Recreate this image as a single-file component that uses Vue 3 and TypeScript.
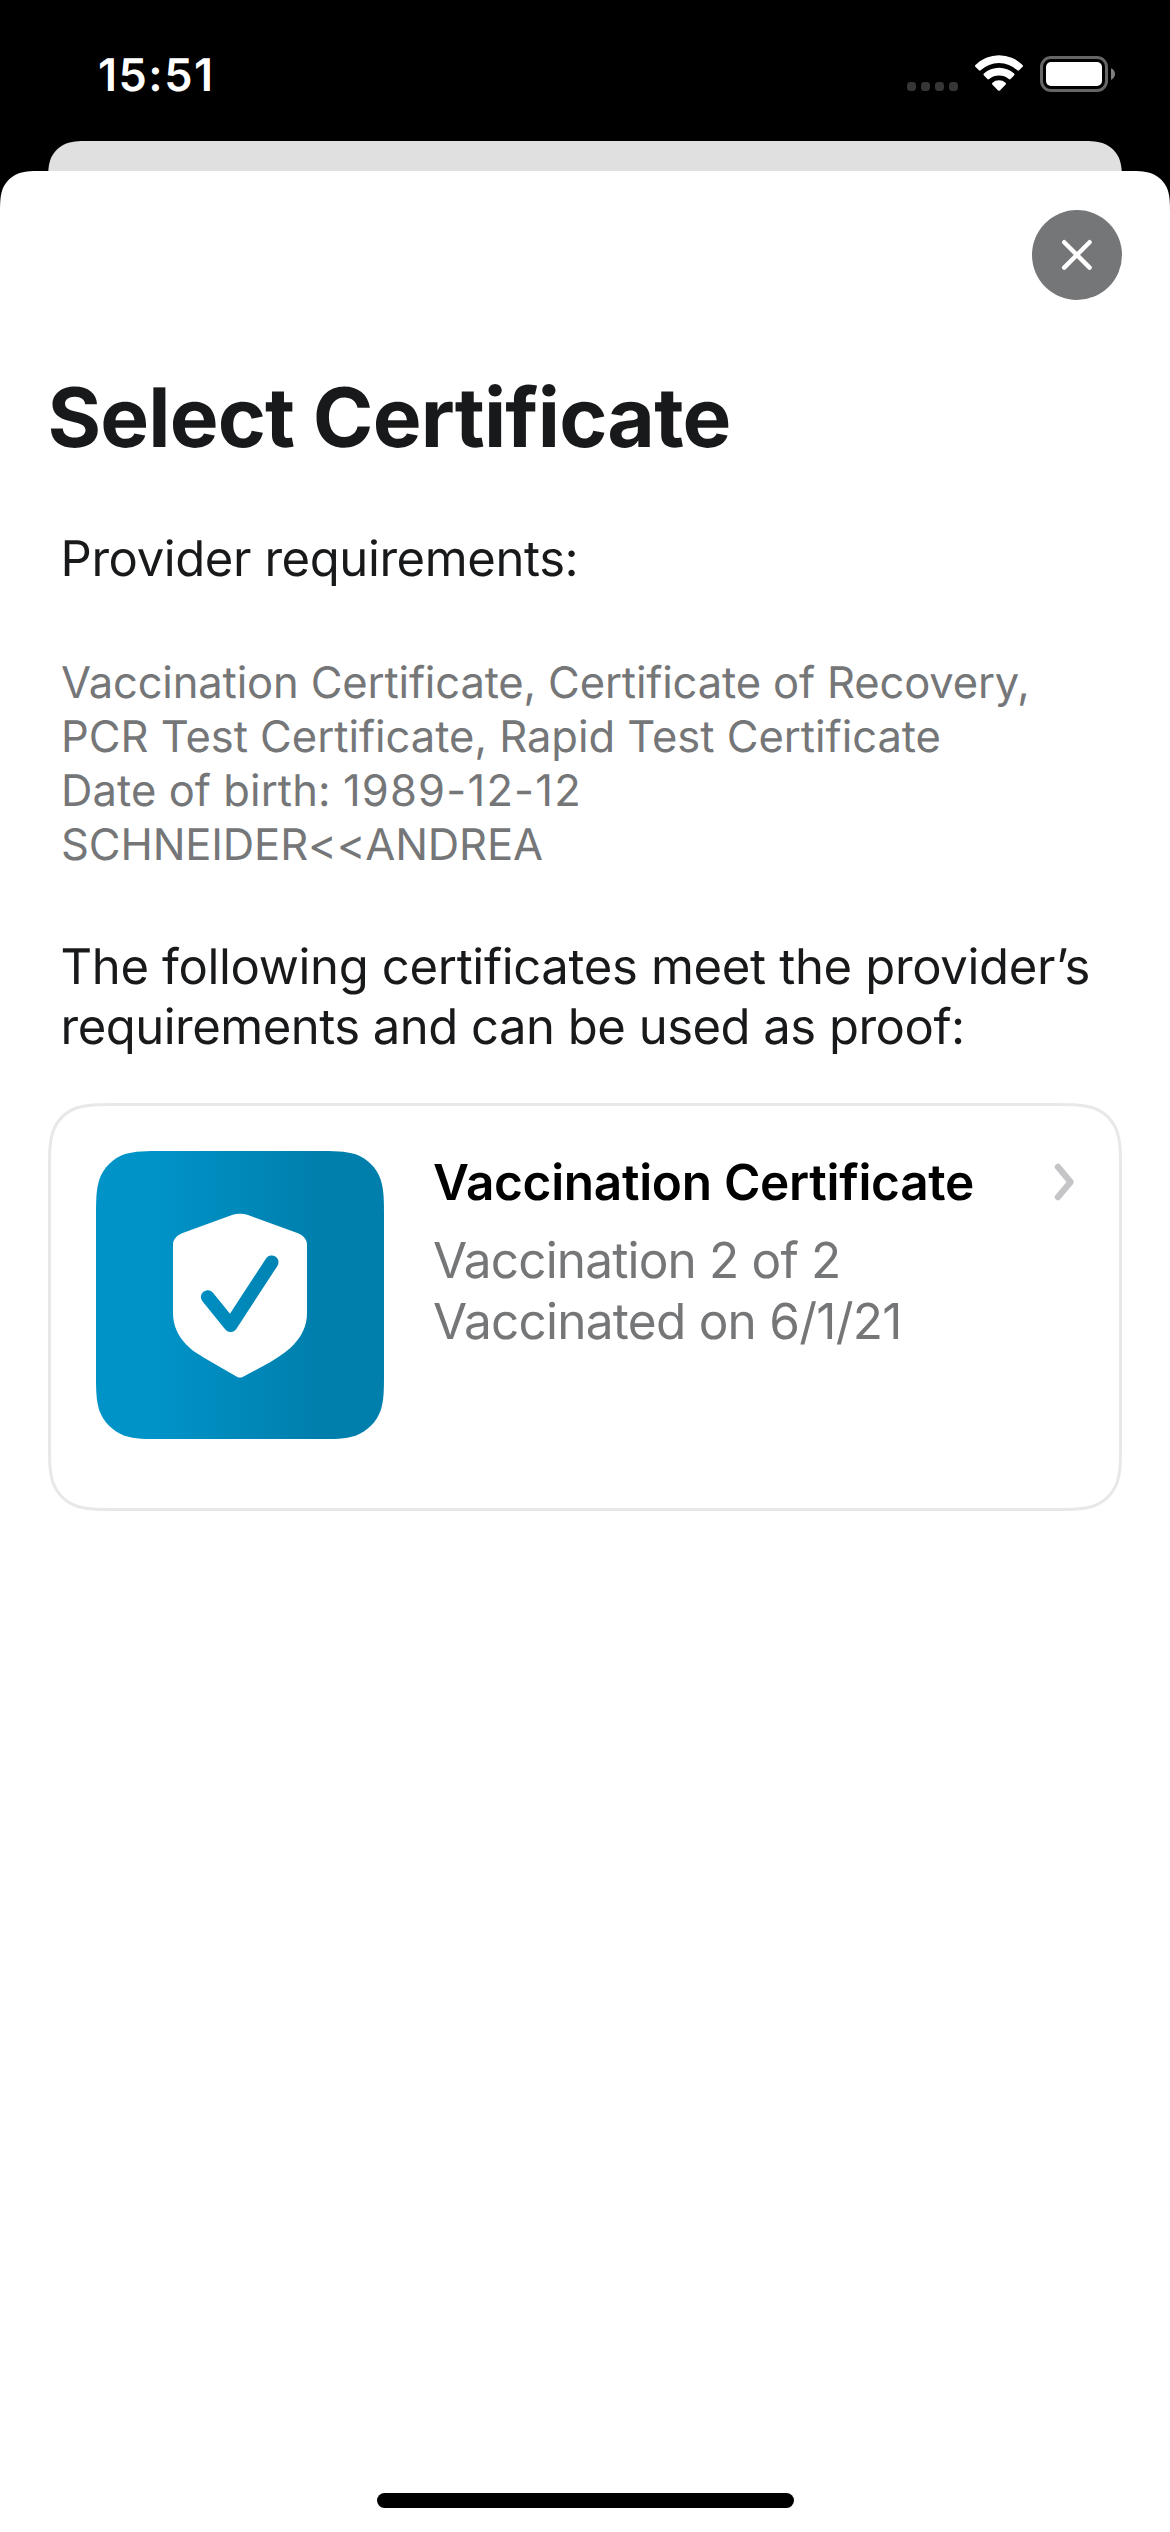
<script setup lang="ts">
interface Run {
  text: string
  spacing: number
}

type Line = Run[]

const title = 'Select Certificate'

const requirements: Line[] = [
  [{ text: 'Vaccination Certificate, Certificate of Recovery,', spacing: -0.143 }],
  [{ text: 'PCR Test Certificate, Rapid Test Certificate', spacing: -0.016 }],
  [
    { text: 'Date of birth: ', spacing: 0.09 },
    { text: '1989-12-12', spacing: 1.2 },
  ],
  [{ text: 'SCHNEIDER<<ANDREA', spacing: -0.127 }],
]

const hint: Line[] = [
  [{ text: 'The following certificates meet the provider’s', spacing: -0.332 }],
  [{ text: 'requirements and can be used as proof:', spacing: -0.502 }],
]

const certificate = {
  name: 'Vaccination Certificate',
  details: [
    { text: 'Vaccination 2 of 2', spacing: -0.828 },
    { text: 'Vaccinated on 6/1/21', spacing: -0.74 },
  ] as Run[],
}

// Rounded rectangle with continuous corners
function squircle(x: number, y: number, w: number, h: number, r: number): string {
  const a = 1.52866471 * r
  const b = 1.08849296 * r
  const c = 0.86840694 * r
  const d = 0.63149399 * r
  const e = 0.074911 * r
  const f = 0.37282392 * r
  const g = 0.16905899 * r
  const R = x + w
  const B = y + h
  return [
    `M${x + a} ${y}H${R - a}`,
    `C${R - b} ${y} ${R - c} ${y} ${R - d} ${y + e}`,
    `C${R - f} ${y + g} ${R - g} ${y + f} ${R - e} ${y + d}`,
    `C${R} ${y + c} ${R} ${y + b} ${R} ${y + a}`,
    `V${B - a}`,
    `C${R} ${B - b} ${R} ${B - c} ${R - e} ${B - d}`,
    `C${R - g} ${B - f} ${R - f} ${B - g} ${R - d} ${B - e}`,
    `C${R - c} ${B} ${R - b} ${B} ${R - a} ${B}`,
    `H${x + a}`,
    `C${x + b} ${B} ${x + c} ${B} ${x + d} ${B - e}`,
    `C${x + f} ${B - g} ${x + g} ${B - f} ${x + e} ${B - d}`,
    `C${x} ${B - c} ${x} ${B - b} ${x} ${B - a}`,
    `V${y + a}`,
    `C${x} ${y + b} ${x} ${y + c} ${x + e} ${y + d}`,
    `C${x + g} ${y + f} ${x + f} ${y + g} ${x + d} ${y + e}`,
    `C${x + c} ${y} ${x + b} ${y} ${x + a} ${y}Z`,
  ].join('')
}

const tilePath = squircle(0, 0, 288, 288, 45)
const cardPath = squircle(1.5, 1.5, 1071, 405, 43.5)
const behindClip = `path('${squircle(0, 0, 1074, 200, 30)}')`
const sheetClip = `path('${squircle(0, 0, 1170, 2500, 30)}')`
</script>

<template>
  <div class="screen">
    <header class="status">
      <time class="clock">15:51</time>
      <div class="indicators">
        <svg class="cellular" width="51" height="9" viewBox="0 0 51 9" aria-hidden="true">
          <rect v-for="i in 4" :key="i" :x="(i - 1) * 14" y="0" width="9" height="9" rx="3.4" fill="#363636" />
        </svg>
        <svg class="wifi" width="50" height="38" viewBox="974 54 50 38" fill="#fff" aria-hidden="true">
          <path d="M975.4 66.7Q974.6 66 975.4 65.1A33.2 33.2 0 0 1 1022.6 65.1Q1023.4 66 1022.6 66.7L1019.1 70.3Q1018.3 71.1 1017.4 70.3A27 27 0 0 0 980.6 70.3Q979.7 71.1 978.9 70.3Z" />
          <path d="M983.8 75.3Q983 74.4 983.9 73.6A22.4 22.4 0 0 1 1014.1 73.6Q1015 74.4 1014.2 75.3L1010.6 79Q1009.8 79.8 1008.9 79A16 16 0 0 0 989.1 79Q988.2 79.8 987.4 79Z" />
          <path d="M992.3 84.5Q991.5 83.7 992.5 82.8A9.9 9.9 0 0 1 1005.5 82.8Q1006.5 83.7 1005.7 84.5L999.9 90.4Q999 91.3 998.1 90.4Z" />
        </svg>
        <svg class="battery" width="75" height="36" viewBox="0 0 75 36" aria-hidden="true">
          <rect x="1.5" y="1.5" width="65" height="33" rx="9.5" fill="none" stroke="#666" stroke-width="3" />
          <rect x="6" y="6" width="56" height="24" rx="5" fill="#fff" />
          <path d="M71 12.3C73.4 13.3 75 15.5 75 18.1S73.4 22.9 71 23.9Z" fill="#808080" />
        </svg>
      </div>
    </header>

    <div class="behind" :style="{ clipPath: behindClip }"></div>

    <main class="sheet" :style="{ clipPath: sheetClip }">
      <div class="toolbar">
        <button class="close" type="button" aria-label="Close">
          <svg width="90" height="90" viewBox="0 0 90 90" fill="none" stroke="#fff" stroke-width="4.4" stroke-linecap="round" aria-hidden="true">
            <path d="M32.2 32.2L57.6 57.6M57.6 32.2L32.2 57.6" />
          </svg>
        </button>
      </div>

      <h1 class="title">{{ title }}</h1>

      <p class="label">Provider requirements:</p>

      <div class="requirements">
        <p v-for="(line, i) in requirements" :key="i"><span v-for="run in line" :key="run.text" :style="{ letterSpacing: run.spacing + 'px' }">{{ run.text }}</span></p>
      </div>

      <div class="hint">
        <p v-for="(line, i) in hint" :key="i"><span v-for="run in line" :key="run.text" :style="{ letterSpacing: run.spacing + 'px' }">{{ run.text }}</span></p>
      </div>

      <section class="card">
        <svg class="outline" width="1074" height="408" viewBox="0 0 1074 408" aria-hidden="true">
          <path :d="cardPath" fill="#fff" stroke="#e8e8e8" stroke-width="3" />
        </svg>
        <div class="content">
          <svg class="tile" width="288" height="288" viewBox="0 0 288 288" aria-hidden="true">
            <defs>
              <linearGradient id="tile-blue" gradientUnits="userSpaceOnUse" x1="60" y1="0" x2="222" y2="0">
                <stop offset="0" stop-color="#0093c8" />
                <stop offset="1" stop-color="#007fad" />
              </linearGradient>
            </defs>
            <path :d="tilePath" fill="url(#tile-blue)" />
            <path
              d="M77 93.5C77 88.5 80.5 84.5 86 82.2L136 64Q140 62.7 144 62.7T152 64L202 82.2C207.5 84.5 211 88.5 211 93.5V161.7C211 174.5 206 184.8 197.3 194C190 201.5 183 205.7 174 211.3L146.7 226Q144 227.2 141.3 226L114 210.3C105 204.6 98 201.5 90.7 194C82 184.8 77 174.5 77 161.7Z"
              fill="#fff"
            />
            <path
              d="M111.7 146L134.6 174.3L175.7 111.2"
              fill="none"
              stroke="url(#tile-blue)"
              stroke-width="13.6"
              stroke-linecap="round"
              stroke-linejoin="round"
            />
          </svg>
          <div class="info">
            <h2 class="name">{{ certificate.name }}</h2>
            <p v-for="line in certificate.details" :key="line.text" class="detail" :style="{ letterSpacing: line.spacing + 'px' }">{{ line.text }}</p>
          </div>
          <svg class="chevron" width="24" height="40" viewBox="0 0 24 40" fill="none" stroke="#c5c5c7" stroke-width="6.4" stroke-linecap="round" stroke-linejoin="round" aria-hidden="true">
            <path d="M6 5L18.6 20L6 35" />
          </svg>
        </div>
      </section>

      <div class="home"></div>
    </main>
  </div>
</template>

<style>
body {
  margin: 0;
  background: #000;
}
</style>

<style scoped>
.screen {
  display: flex;
  flex-direction: column;
  width: 1170px;
  height: 2532px;
  overflow: hidden;
  background: #000;
  font-family: Inter, 'Liberation Sans', sans-serif;
  text-rendering: geometricPrecision;
  color: #18191b;
}

h1,
h2,
p {
  margin: 0;
  white-space: pre;
}

.status {
  display: flex;
  justify-content: space-between;
  flex: none;
  height: 141px;
  color: #fff;
}

.clock {
  margin: 45px 0 0 98px;
  font-size: 45px;
  font-weight: 600;
  line-height: 60px;
  letter-spacing: 1.5px;
}

.indicators {
  display: flex;
  align-items: flex-start;
  padding-right: 55px;
}

.cellular {
  margin-top: 82px;
}

.wifi {
  margin: 54px 0 0 16px;
}

.battery {
  margin: 56px 0 0 16px;
}

.behind {
  flex: none;
  width: 1074px;
  height: 30px;
  margin: 0 48px;
  background: #e0e0e0;
}

.sheet {
  display: flex;
  flex-direction: column;
  flex: 1;
  background: #fff;
}

.toolbar {
  display: flex;
  justify-content: flex-end;
  padding: 39px 48px 0;
}

.close {
  display: block;
  width: 90px;
  height: 90px;
  padding: 0;
  border: 0;
  border-radius: 50%;
  background: #757678;
}

.close svg {
  display: block;
}

.title {
  margin: 69px 0 0 47.5px;
  font-size: 82px;
  font-weight: 700;
  line-height: 98px;
  letter-spacing: -0.851px;
}

.label {
  margin: 62px 0 0 60.5px;
  font-size: 49px;
  line-height: 60px;
  letter-spacing: -0.408px;
}

.requirements {
  margin: 67px 0 0 61px;
  font-size: 43.5px;
  line-height: 54px;
  color: #757678;
}

.hint {
  margin: 65px 0 0 60.5px;
  font-size: 49px;
  line-height: 60px;
}

.card {
  display: grid;
  width: 1074px;
  height: 408px;
  margin: 46px 48px 0;
}

.outline,
.content {
  grid-area: 1 / 1;
}

.content {
  display: flex;
  padding: 48px 46px 0 48px;
}

.info {
  flex: 1;
  padding: 1px 0 0 49px;
}

.name {
  font-size: 49.5px;
  font-weight: 600;
  line-height: 60px;
  letter-spacing: -0.283px;
  color: #000;
}

.detail {
  font-size: 49.5px;
  line-height: 61px;
  color: #757678;
}

.name + .detail {
  margin-top: 18px;
}

.chevron {
  margin-top: 11px;
}

.home {
  width: 417px;
  height: 15px;
  margin: auto 0 24px 377px;
  border-radius: 7.5px;
  background: #000;
}
</style>
